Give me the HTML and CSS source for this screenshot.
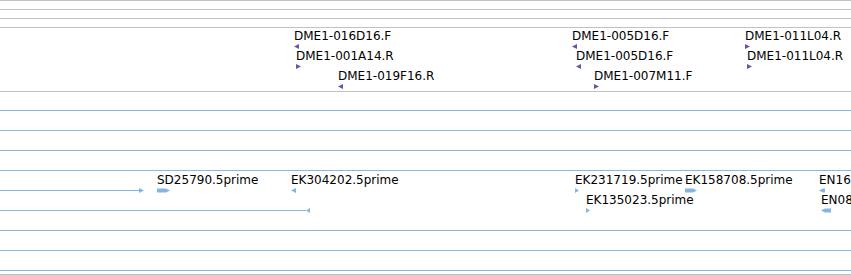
FILE: index.html
```html
<!DOCTYPE html>
<html>
<head>
<meta charset="utf-8">
<title>Tracks</title>
<link rel="stylesheet" href="styles.css">
</head>
<body>
<div class="panel">
  <div class="track thin"></div>
  <div class="track thin"></div>
  <div class="track thin"></div>

  <div class="track dme">
    <div class="row">
      <div class="feat" style="left:294px"><span class="label">DME1-016D16.F</span><svg class="glyph purple" width="5" height="5"><polygon points="0,2.5 5,0 5,5"/></svg></div>
      <div class="feat" style="left:572px"><span class="label">DME1-005D16.F</span><svg class="glyph purple" width="5" height="5"><polygon points="0,2.5 5,0 5,5"/></svg></div>
      <div class="feat" style="left:745px"><span class="label">DME1-011L04.R</span><svg class="glyph purple" width="5" height="5"><polygon points="0,0 5,2.5 0,5"/></svg></div>
    </div>
    <div class="row">
      <div class="feat" style="left:296px"><span class="label">DME1-001A14.R</span><svg class="glyph purple" width="5" height="5"><polygon points="0,0 5,2.5 0,5"/></svg></div>
      <div class="feat" style="left:576px"><span class="label">DME1-005D16.F</span><svg class="glyph purple" width="5" height="5"><polygon points="0,2.5 5,0 5,5"/></svg></div>
      <div class="feat" style="left:747px"><span class="label">DME1-011L04.R</span><svg class="glyph purple" width="5" height="5"><polygon points="0,0 5,2.5 0,5"/></svg></div>
    </div>
    <div class="row">
      <div class="feat" style="left:338px"><span class="label">DME1-019F16.R</span><svg class="glyph purple" width="5" height="5"><polygon points="0,2.5 5,0 5,5"/></svg></div>
      <div class="feat" style="left:594px"><span class="label">DME1-007M11.F</span><svg class="glyph purple" width="5" height="5"><polygon points="0,0 5,2.5 0,5"/></svg></div>
    </div>
  </div>

  <div class="track est">
    <div class="row"><div class="line full"></div></div>
    <div class="row"><div class="line full"></div></div>
    <div class="row"><div class="line full"></div></div>
    <div class="row"><div class="line full"></div></div>
    <div class="row">
      <svg class="span blue" width="145" height="5"><rect x="0" y="2" width="140" height="1"/><polygon points="139,0 144,2.5 139,5"/></svg>
      <div class="feat" style="left:157px"><span class="label">SD25790.5prime</span><svg class="glyph blue" width="13" height="5"><polygon points="0,0.5 9,0.5 13,2.5 9,4.5 0,4.5"/></svg></div>
      <div class="feat" style="left:291px"><span class="label">EK304202.5prime</span><svg class="glyph blue" width="5" height="5"><polygon points="0,2.5 5,0 5,5"/></svg></div>
      <div class="feat" style="left:575px"><span class="label">EK231719.5prime</span><svg class="glyph blue" width="4" height="5"><polygon points="0,0 4,2.5 0,5"/></svg></div>
      <div class="feat" style="left:685px"><span class="label">EK158708.5prime</span><svg class="glyph blue" width="12" height="5"><polygon points="0,0.5 8,0.5 12,2.5 8,4.5 0,4.5"/></svg></div>
      <div class="feat" style="left:819px"><span class="label">EN163218.5prime</span><svg class="glyph blue" width="6" height="5"><polygon points="0,2.5 4,0.5 6,0.5 6,4.5 4,4.5"/></svg></div>
    </div>
    <div class="row">
      <svg class="span blue" width="311" height="5"><rect x="0" y="2" width="306" height="1"/><polygon points="306,2.5 310,0 310,5"/></svg>
      <div class="feat" style="left:586px"><span class="label">EK135023.5prime</span><svg class="glyph blue" width="4" height="5"><polygon points="0,0 4,2.5 0,5"/></svg></div>
      <div class="feat" style="left:821px"><span class="label">EN082716.5prime</span><svg class="glyph blue" width="10" height="5"><polygon points="0,2.5 4,0.5 10,0.5 10,4.5 4,4.5"/></svg></div>
    </div>
    <div class="row"><div class="line full"></div></div>
    <div class="row"><div class="line full"></div></div>
    <div class="row"><div class="line full"></div></div>
  </div>
</div>
</body>
</html>
```

FILE: styles.css
```css
html, body {
  margin: 0;
  padding: 0;
  background: #ffffff;
  overflow: hidden;
}

.panel {
  width: 851px;
  height: 275px;
  overflow: hidden;
  display: flex;
  flex-direction: column;
  font-family: "DejaVu Sans", "Liberation Sans", sans-serif;
  font-size: 12px;
  color: #000;
}

.track {
  border-top: 1px solid #c2c2c2;
  position: relative;
  flex: none;
}

.thin {
  height: 8px;
}

.dme {
  height: 63px;
  display: flex;
  flex-direction: column;
}

.est {
  display: flex;
  flex-direction: column;
  padding-bottom: 2px;
  border-bottom: 1px solid #c2c2c2;
}

.row {
  position: relative;
  height: 20px;
  flex: none;
}

.line {
  position: absolute;
  top: 18px;
  left: 0;
  height: 1px;
  background: #88b8e0;
}

.line.full {
  right: 0;
}

.span {
  position: absolute;
  top: 16px;
  left: 0;
  display: block;
}

.feat {
  position: absolute;
  top: 0;
  display: flex;
  flex-direction: column;
  align-items: flex-start;
}

.label {
  display: block;
  padding-top: 2px;
  line-height: 12px;
  white-space: nowrap;
}

.glyph {
  display: block;
  margin-top: 2px;
}

.purple {
  fill: #6c4fb0;
}

.blue {
  fill: #84b6e0;
}
```
